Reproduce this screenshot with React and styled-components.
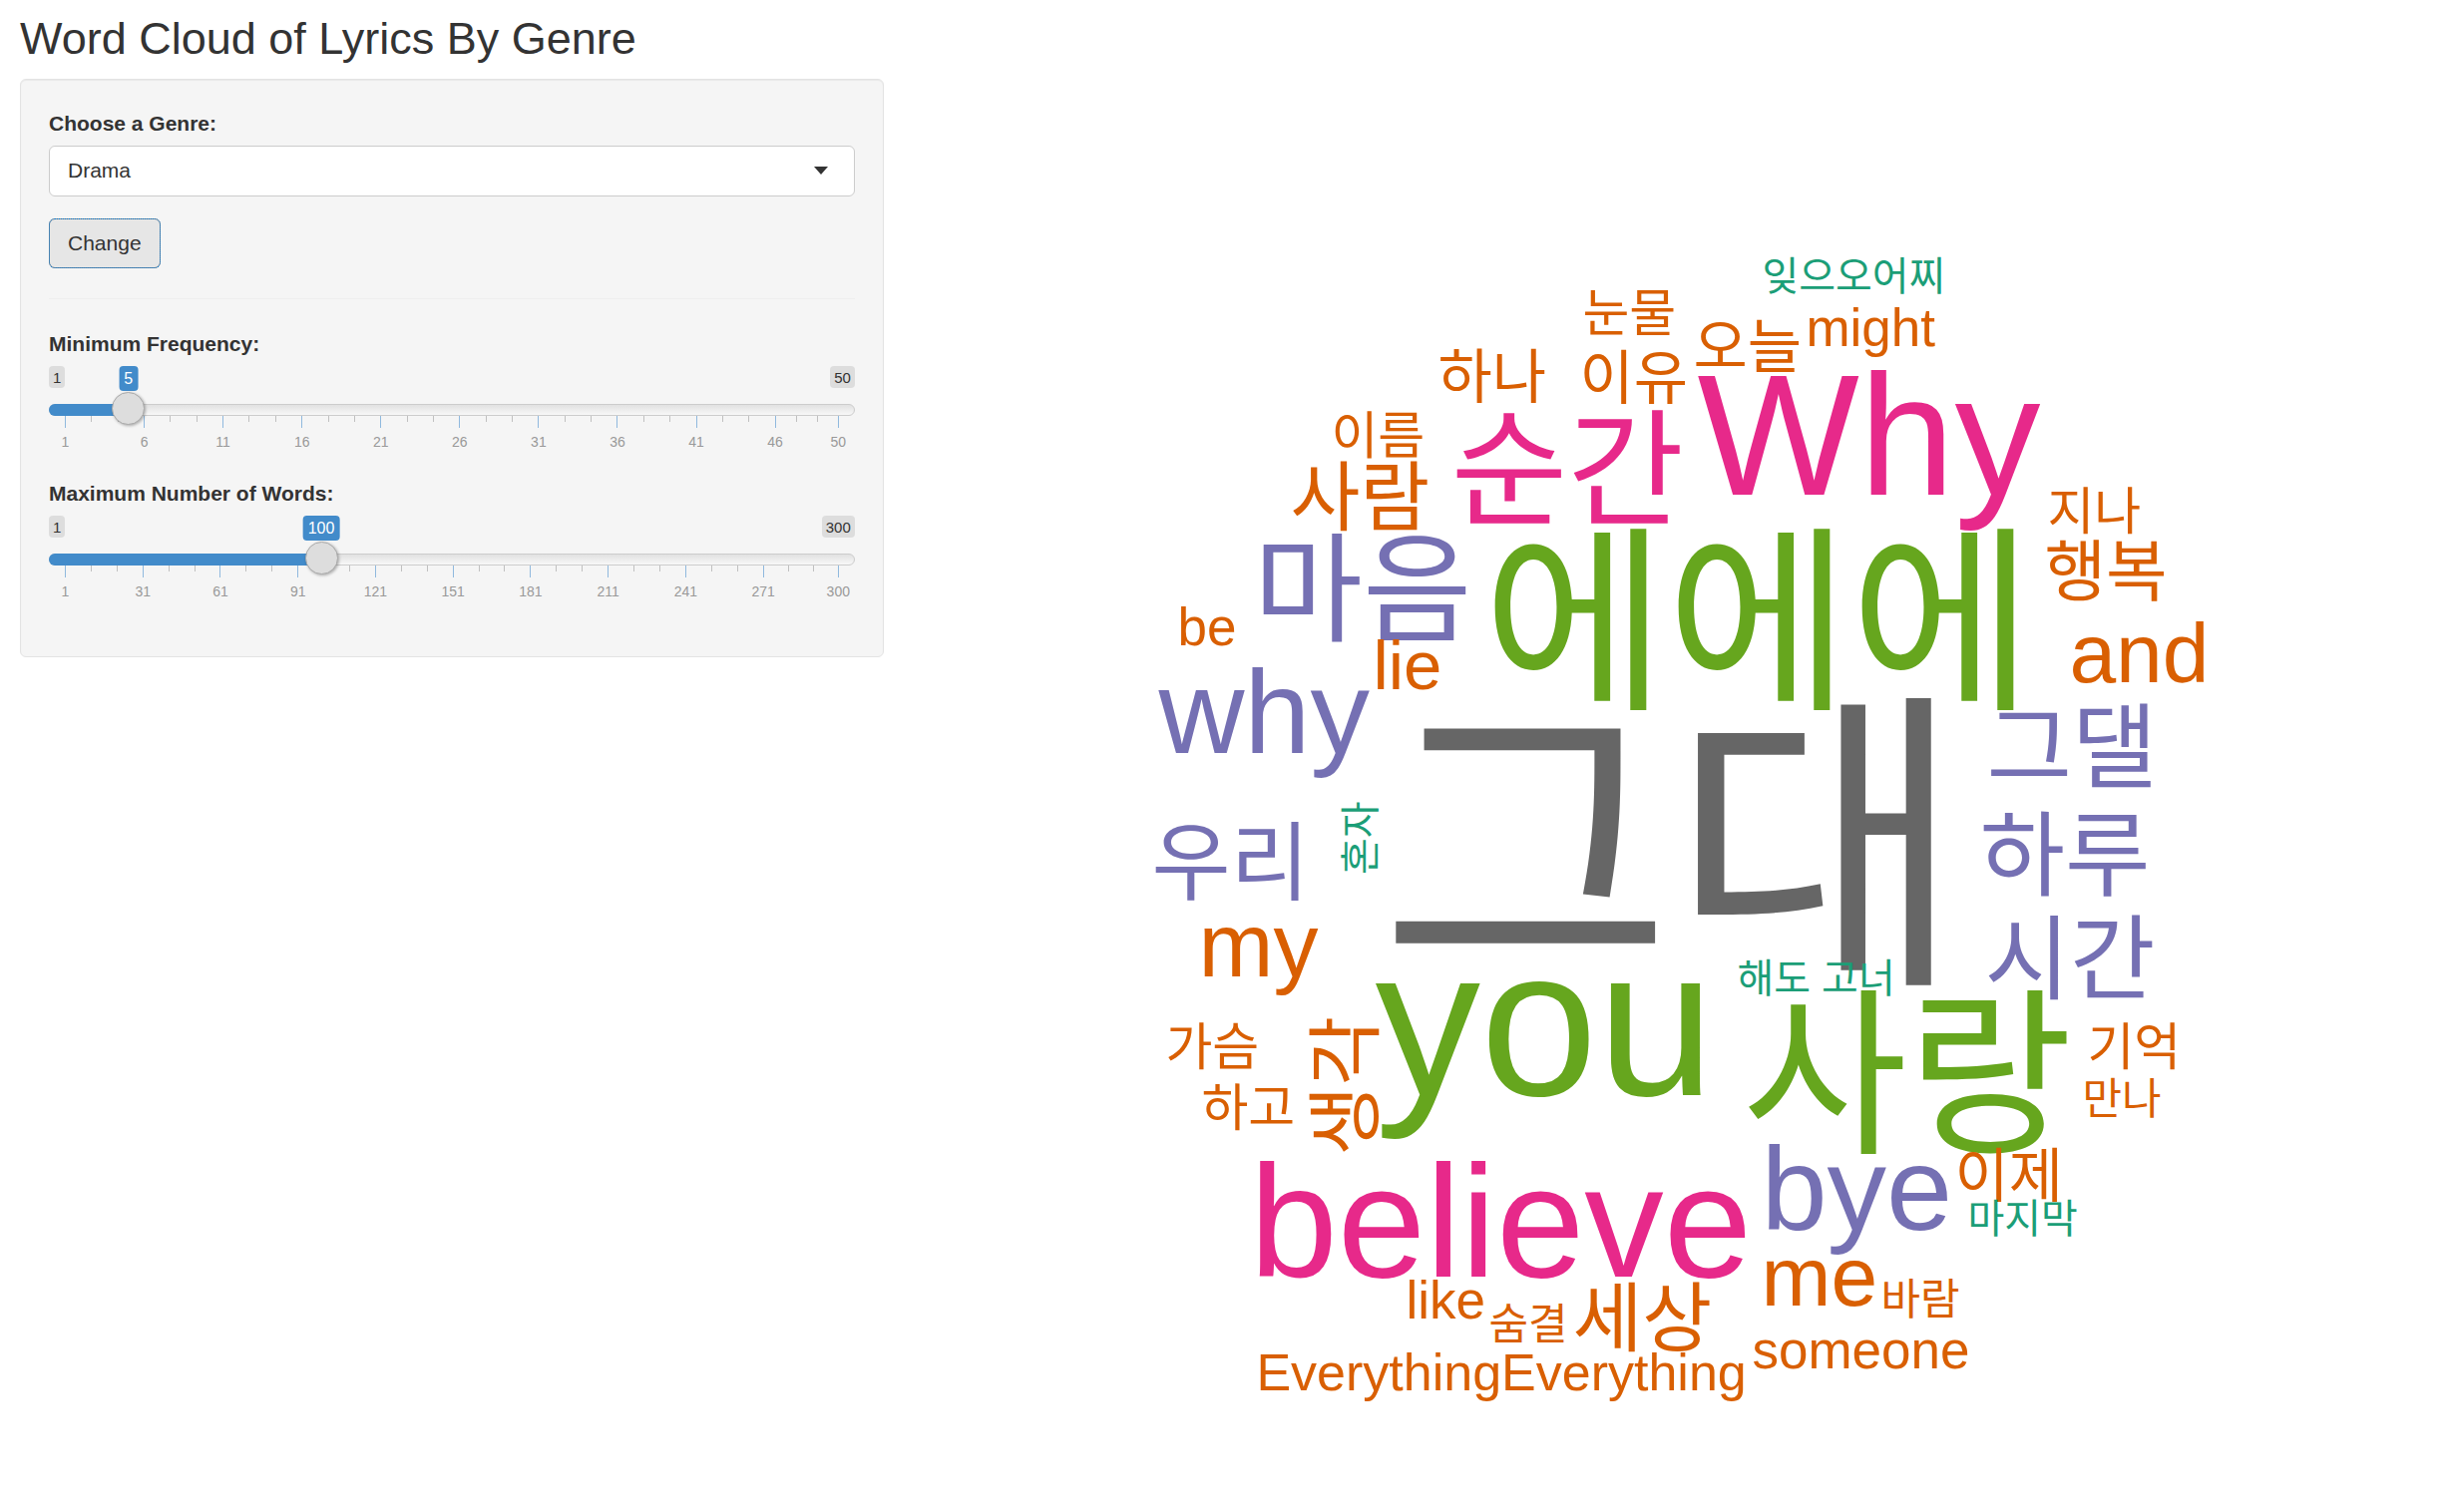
import React, { useId, useState } from "react";
import styled, { createGlobalStyle, css } from "styled-components";

const colors = {
  text: "#333333",
  panel: "#f5f5f5",
  panelBorder: "#e3e3e3",
  accent: "#428bca",
  teal: "#1b9e77",
  orange: "#d95f02",
  purple: "#7570b3",
  pink: "#e7298a",
  green: "#66a61e",
  gray: "#666666",
};

const THUMB = 33;

const GlobalStyle = createGlobalStyle`
  *, *::before, *::after { box-sizing: border-box; }
  body {
    margin: 0;
    background: #ffffff;
    color: ${colors.text};
    font-family: "Liberation Sans", "Noto Sans CJK KR", Arial, sans-serif;
    font-size: 21px;
    line-height: 30px;
  }
`;

const Page = styled.div`
  padding: 14px 20px 20px;
`;

const Title = styled.h2`
  margin: 0 0 15px;
  font-size: 45px;
  font-weight: 400;
  line-height: 50px;
`;

const Columns = styled.div`
  display: grid;
  grid-template-columns: minmax(0, 4fr) minmax(0, 7fr);
  gap: 36px;
  align-items: start;
`;

const Panel = styled.form`
  padding: 29px 28px 28px;
  background: ${colors.panel};
  border: 1px solid ${colors.panelBorder};
  border-radius: 6px;
  box-shadow: inset 0 1px 1px rgba(0, 0, 0, 0.05);
`;

const FieldLabel = styled.label`
  display: block;
  margin-bottom: 7px;
  font-weight: 700;
`;

const SelectBox = styled.div`
  position: relative;
  margin-bottom: 22px;

  &::after {
    content: "";
    position: absolute;
    top: 21px;
    right: 27px;
    border: solid transparent;
    border-width: 8px 7px 0;
    border-top-color: ${colors.text};
    pointer-events: none;
  }
`;

const Select = styled.select`
  display: block;
  width: 100%;
  height: 51px;
  padding: 0 18px 2px;
  appearance: none;
  background: #ffffff;
  border: 1px solid #cccccc;
  border-radius: 6px;
  color: inherit;
  font: inherit;
`;

const Button = styled.button`
  display: block;
  height: 50px;
  padding: 0 18px;
  background: #e6e6e6;
  border: 1px solid #8c8c8c;
  border-radius: 6px;
  outline: 1px dotted #0078d7;
  outline-offset: -1px;
  color: inherit;
  font: inherit;
`;

const Divider = styled.hr`
  height: 1px;
  margin: 30px 0;
  border: 0;
  background: #eeeeee;
`;

const SliderGroup = styled.div`
  padding-bottom: 29px;
`;

const BadgeRow = styled.div`
  position: relative;
  display: flex;
  justify-content: space-between;
  align-items: flex-start;
  height: 25px;
  margin-bottom: 1px;
`;

const LimitBadge = styled.span`
  height: 22px;
  padding: 2px 4px 0;
  background: #dddddd;
  border-radius: 4px;
  font-size: 15px;
  line-height: 20px;
`;

const ValueBadge = styled.output`
  position: absolute;
  top: 0;
  padding: 0 5px;
  transform: translateX(-50%);
  background: ${colors.accent};
  border-radius: 4px;
  color: #ffffff;
  font-size: 16px;
  line-height: 25px;
`;

const Track = styled.div`
  position: relative;
  z-index: 1;
  display: grid;
  grid-template-columns: minmax(0, 1fr);
  align-items: center;
  height: 36px;

  & > * {
    grid-area: 1 / 1;
  }
`;

const Rail = styled.div`
  height: 12px;
  background: linear-gradient(to bottom, #e1e1e1, #f8f8f8);
  border: 1px solid #cccccc;
  border-radius: 12px;
`;

const Fill = styled.div`
  height: 12px;
  background: ${colors.accent};
  border-radius: 12px 0 0 12px;
`;

const thumb = css`
  width: ${THUMB}px;
  height: ${THUMB}px;
  background: #dddddd;
  border: 1px solid #aaaaaa;
  border-radius: 50%;
  box-shadow: 1px 1px 3px rgba(0, 0, 0, 0.3);
  cursor: pointer;
`;

const Range = styled.input`
  width: 100%;
  height: 36px;
  margin: 0;
  appearance: none;
  background: transparent;

  &::-webkit-slider-runnable-track {
    height: 12px;
    background: transparent;
  }
  &::-webkit-slider-thumb {
    appearance: none;
    margin-top: -12px;
    ${thumb}
  }
  &::-moz-range-thumb {
    ${thumb}
  }
`;

const Scale = styled.div`
  display: flex;
  margin-top: -12px;
  padding: 0 16px;
`;

const Segment = styled.div`
  flex: ${(p) => p.$span} 1 0;
  min-width: 1px;
`;

const Ticks = styled.div`
  display: grid;
  grid-auto-flow: column;
  grid-auto-columns: 1fr;
  align-items: start;
  height: 12px;
  margin-bottom: 6px;
`;

const Tick = styled.span`
  height: ${(p) => (p.$major ? 12 : 6)}px;
  border-left: 1px solid ${(p) => (p.$major ? "#90b9de" : "#c0c0c0")};
`;

const TickLabel = styled.div`
  display: flex;
  justify-content: center;
  width: 1px;
  color: #999999;
  font-size: 14px;
  line-height: 16px;
`;

const Cloud = styled.div`
  position: relative;
  width: 1100px;
  height: 1180px;
  margin: 160px auto 0;
`;

const Word = styled.span`
  position: absolute;
  left: ${(p) => p.$x}px;
  top: ${(p) => p.$y - Math.round(p.$size * 0.85)}px;
  color: ${(p) => colors[p.$color]};
  font-size: ${(p) => p.$size}px;
  line-height: 1;
  white-space: nowrap;
  ${(p) =>
    p.$vertical &&
    css`
      transform: rotate(-90deg);
      transform-origin: 0 85%;
    `}
`;

/* text, size, colour, x of the first letter, y of the baseline, vertical */
const words = [
  ["그대", 318, "gray", 254, 725],
  ["you", 211, "green", 249, 860],
  ["에에에", 200, "green", 357, 458],
  ["사랑", 180, "green", 617, 904],
  ["Why", 172, "pink", 572, 257],
  ["believe", 159, "pink", 123, 1042],
  ["순간", 127, "pink", 325, 279],
  ["마음", 119, "purple", 127, 395],
  ["bye", 119, "purple", 636, 994],
  ["why", 119, "purple", 32, 516],
  ["그댈", 93, "purple", 862, 545],
  ["하루", 93, "purple", 855, 653],
  ["시간", 93, "purple", 860, 757],
  ["우리", 86, "purple", 25, 657],
  ["my", 90, "orange", 72, 741],
  ["me", 84, "orange", 636, 1070],
  ["and", 84, "orange", 945, 445],
  ["생각", 76, "orange", 248, 920, true],
  ["사람", 76, "orange", 164, 288],
  ["세상", 76, "orange", 447, 1111],
  ["lie", 69, "orange", 247, 453],
  ["행복", 67, "orange", 920, 358],
  ["하나", 59, "orange", 312, 161],
  ["이유", 59, "orange", 454, 162],
  ["오늘", 59, "orange", 568, 131],
  ["이제", 59, "orange", 830, 962],
  ["be", 53, "orange", 51, 408],
  ["might", 53, "orange", 681, 108],
  ["like", 53, "orange", 280, 1083],
  ["someone", 53, "orange", 627, 1133],
  ["EverythingEverything", 52, "orange", 130, 1155],
  ["눈물", 51, "orange", 457, 93],
  ["이름", 51, "orange", 205, 216],
  ["지나", 51, "orange", 923, 292],
  ["가슴", 51, "orange", 39, 829],
  ["기억", 51, "orange", 963, 829],
  ["하고", 51, "orange", 75, 890],
  ["만나", 43, "orange", 958, 879],
  ["숨결", 43, "orange", 363, 1105],
  ["바람", 43, "orange", 756, 1080],
  ["잊으오어찌", 40, "teal", 637, 52],
  ["해도 고너", 40, "teal", 612, 756],
  ["마지막", 40, "teal", 843, 997],
  ["혼자", 40, "teal", 249, 638, true],
];

function Slider({ label, min, max, step, initial }) {
  const id = useId();
  const [value, setValue] = useState(initial);
  const ratio = (value - min) / (max - min);
  const center = `calc(${THUMB / 2}px + (100% - ${THUMB}px) * ${ratio})`;

  const majors = [];
  for (let v = min; v < max; v += step) majors.push(v);

  return (
    <SliderGroup>
      <FieldLabel htmlFor={id}>{label}</FieldLabel>
      <BadgeRow>
        <LimitBadge>{min}</LimitBadge>
        <LimitBadge>{max}</LimitBadge>
        <ValueBadge htmlFor={id} style={{ left: center }}>{value}</ValueBadge>
      </BadgeRow>
      <Track>
        <Rail />
        <Fill style={{ width: center }} />
        <Range
          id={id}
          type="range"
          min={min}
          max={max}
          value={value}
          onChange={(e) => setValue(Number(e.target.value))}
        />
      </Track>
      <Scale aria-hidden="true">
        {majors.map((v) => (
          <Segment key={v} $span={Math.min(step, max - v)}>
            <Ticks>
              <Tick $major />
              <Tick />
              <Tick />
            </Ticks>
            <TickLabel>{v}</TickLabel>
          </Segment>
        ))}
        <Segment $span={0}>
          <Ticks>
            <Tick $major />
          </Ticks>
          <TickLabel>{max}</TickLabel>
        </Segment>
      </Scale>
    </SliderGroup>
  );
}

export default function App() {
  return (
    <>
      <GlobalStyle />
      <Page>
        <Title>Word Cloud of Lyrics By Genre</Title>
        <Columns>
          <Panel onSubmit={(e) => e.preventDefault()}>
            <FieldLabel htmlFor="genre">Choose a Genre:</FieldLabel>
            <SelectBox>
              <Select id="genre" defaultValue="Drama">
                <option>Drama</option>
              </Select>
            </SelectBox>
            <Button type="submit">Change</Button>
            <Divider />
            <Slider label="Minimum Frequency:" min={1} max={50} step={5} initial={5} />
            <Slider label="Maximum Number of Words:" min={1} max={300} step={30} initial={100} />
          </Panel>
          <main>
            <Cloud>
              {words.map(([text, size, color, x, y, vertical]) => (
                <Word key={text} $size={size} $color={color} $x={x} $y={y} $vertical={vertical}>
                  {text}
                </Word>
              ))}
            </Cloud>
          </main>
        </Columns>
      </Page>
    </>
  );
}
